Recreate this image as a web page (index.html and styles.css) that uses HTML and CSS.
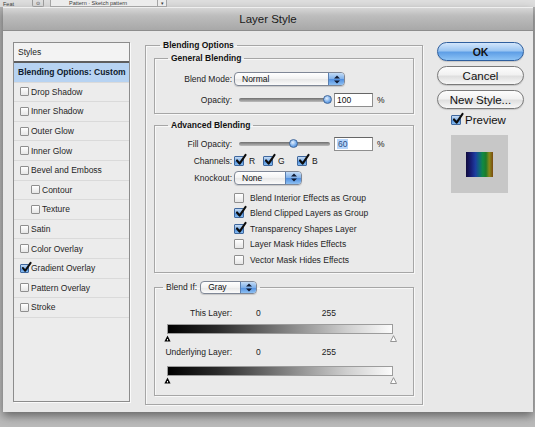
FILE: index.html
```html
<!DOCTYPE html>
<html lang="en">
<head>
<meta charset="utf-8">
<title>Layer Style</title>
<link rel="stylesheet" href="styles.css">
</head>
<body>
<div class="topstrip">
  <div class="ts-row">
    <span class="ts-feat">Feat</span>
    <span class="ts-icon">⊙</span>
    <span class="ts-drop"><span>Pattern · Sketch pattern</span><span class="ts-arrow">▾</span></span>
  </div>
</div>
<div class="dialog">
  <div class="titlebar">Layer Style</div>
  <div class="dbody">
    <div class="styles">
      <div class="styles-head">Styles</div>
      <div class="srow sel">Blending Options: Custom</div>
      <div class="srow"><span class="cb"></span>Drop Shadow</div>
      <div class="srow"><span class="cb"></span>Inner Shadow</div>
      <div class="srow"><span class="cb"></span>Outer Glow</div>
      <div class="srow"><span class="cb"></span>Inner Glow</div>
      <div class="srow"><span class="cb"></span>Bevel and Emboss</div>
      <div class="srow sub"><span class="cb"></span>Contour</div>
      <div class="srow sub"><span class="cb"></span>Texture</div>
      <div class="srow"><span class="cb"></span>Satin</div>
      <div class="srow"><span class="cb"></span>Color Overlay</div>
      <div class="srow"><span class="cb on"><svg width="11" height="11" viewBox="0 0 12 12"><path d="M2 6.5 4.6 9.6 10.5 1" fill="none" stroke="#0d0d0d" stroke-width="2.2" stroke-linecap="round" stroke-linejoin="round"/></svg></span>Gradient Overlay</div>
      <div class="srow"><span class="cb"></span>Pattern Overlay</div>
      <div class="srow"><span class="cb"></span>Stroke</div>
    </div>

    <fieldset class="outer">
      <legend>Blending Options</legend>

      <fieldset class="group general">
        <legend>General Blending</legend>
        <div class="form">
          <span class="lbl">Blend Mode:</span>
          <div class="ctl">
            <span class="popup w-normal"><span class="ptext">Normal</span><span class="parr"><svg width="8" height="11" viewBox="0 0 8 11"><path d="M1 4.5 4 1.5 7 4.5Z M1 6.5 4 9.5 7 6.5Z" fill="#101b33"/></svg></span></span>
          </div>
          <span class="lbl">Opacity:</span>
          <div class="ctl">
            <span class="slider"><span class="thumb" style="left:84px"></span></span>
            <span class="num">100</span><span class="pct">%</span>
          </div>
        </div>
      </fieldset>

      <fieldset class="group adv">
        <legend>Advanced Blending</legend>
        <div class="form">
          <span class="lbl">Fill Opacity:</span>
          <div class="ctl r17">
            <span class="slider"><span class="thumb" style="left:50px"></span></span>
            <span class="num"><span class="hl">60</span></span><span class="pct">%</span>
          </div>
          <span class="lbl">Channels:</span>
          <div class="ctl r17 chans">
            <span class="chan"><span class="cb big on"><svg width="12" height="12" viewBox="0 0 12 12"><path d="M2 6.5 4.6 9.6 10.5 1" fill="none" stroke="#0d0d0d" stroke-width="2.2" stroke-linecap="round" stroke-linejoin="round"/></svg></span>R</span>
            <span class="chan"><span class="cb big on"><svg width="12" height="12" viewBox="0 0 12 12"><path d="M2 6.5 4.6 9.6 10.5 1" fill="none" stroke="#0d0d0d" stroke-width="2.2" stroke-linecap="round" stroke-linejoin="round"/></svg></span>G</span>
            <span class="chan"><span class="cb big on"><svg width="12" height="12" viewBox="0 0 12 12"><path d="M2 6.5 4.6 9.6 10.5 1" fill="none" stroke="#0d0d0d" stroke-width="2.2" stroke-linecap="round" stroke-linejoin="round"/></svg></span>B</span>
          </div>
          <span class="lbl">Knockout:</span>
          <div class="ctl r17">
            <span class="popup w-none"><span class="ptext">None</span><span class="parr"><svg width="8" height="11" viewBox="0 0 8 11"><path d="M1 4.5 4 1.5 7 4.5Z M1 6.5 4 9.5 7 6.5Z" fill="#101b33"/></svg></span></span>
          </div>
          <div class="cbline first"><span class="cb big"></span>Blend Interior Effects as Group</div>
          <div class="cbline"><span class="cb big on"><svg width="12" height="12" viewBox="0 0 12 12"><path d="M2 6.5 4.6 9.6 10.5 1" fill="none" stroke="#0d0d0d" stroke-width="2.2" stroke-linecap="round" stroke-linejoin="round"/></svg></span>Blend Clipped Layers as Group</div>
          <div class="cbline"><span class="cb big on"><svg width="12" height="12" viewBox="0 0 12 12"><path d="M2 6.5 4.6 9.6 10.5 1" fill="none" stroke="#0d0d0d" stroke-width="2.2" stroke-linecap="round" stroke-linejoin="round"/></svg></span>Transparency Shapes Layer</div>
          <div class="cbline"><span class="cb big"></span>Layer Mask Hides Effects</div>
          <div class="cbline"><span class="cb big"></span>Vector Mask Hides Effects</div>
        </div>
      </fieldset>

      <fieldset class="group blendif">
        <legend><span>Blend If:</span><span class="popup w-gray"><span class="ptext">Gray</span><span class="parr"><svg width="8" height="11" viewBox="0 0 8 11"><path d="M1 4.5 4 1.5 7 4.5Z M1 6.5 4 9.5 7 6.5Z" fill="#101b33"/></svg></span></span></legend>
        <div class="blrow"><span class="lbl">This Layer:</span><span class="v0">0</span><span class="v255">255</span></div>
        <div class="gbar"></div>
        <div class="tris">
          <svg width="7" height="7" viewBox="0 0 7 7"><path d="M3.5 0.5 6.6 6.5H0.4Z" fill="#050505"/><rect x="3" y="4" width="1" height="1.5" fill="#fff"/></svg>
          <svg width="7" height="7" viewBox="0 0 7 7"><path d="M3.5 0.7 6.5 6.5H0.5Z" fill="#fff" stroke="#8a8a8a" stroke-width="0.9"/></svg>
        </div>
        <div class="blrow under"><span class="lbl">Underlying Layer:</span><span class="v0">0</span><span class="v255">255</span></div>
        <div class="gbar g2"></div>
        <div class="tris">
          <svg width="7" height="7" viewBox="0 0 7 7"><path d="M3.5 0.5 6.6 6.5H0.4Z" fill="#050505"/><rect x="3" y="4" width="1" height="1.5" fill="#fff"/></svg>
          <svg width="7" height="7" viewBox="0 0 7 7"><path d="M3.5 0.7 6.5 6.5H0.5Z" fill="#fff" stroke="#8a8a8a" stroke-width="0.9"/></svg>
        </div>
      </fieldset>
    </fieldset>

    <div class="side">
      <div class="btn ok">OK</div>
      <div class="btn">Cancel</div>
      <div class="btn">New Style...</div>
      <div class="preview"><span class="cb big on"><svg width="12" height="12" viewBox="0 0 12 12"><path d="M2 6.5 4.6 9.6 10.5 1" fill="none" stroke="#0d0d0d" stroke-width="2.2" stroke-linecap="round" stroke-linejoin="round"/></svg></span>Preview</div>
      <div class="swatch"><div class="swatch-grad"></div></div>
    </div>
  </div>
</div>
</body>
</html>
```

FILE: styles.css
```css
* { box-sizing: border-box; }
html, body { margin: 0; padding: 0; }
body {
  width: 535px;
  height: 427px;
  overflow: hidden;
  background: linear-gradient(#b0b0b0, #bababa);
  font-family: "Liberation Sans", Arial, Helvetica, sans-serif;
  color: #1c1c1c;
}

/* toolbar strip at the very top */
.topstrip { height: 7px; overflow: hidden; background: #dedede; }
.ts-row { display: flex; align-items: center; height: 7px; font-size: 5.5px; line-height: 6px; color: #3a3a3a; }
.ts-feat { margin-left: 3px; width: 29px; }
.ts-icon { width: 12px; height: 7px; border: 1px solid #9a9a9a; border-top: 0; border-radius: 0 0 2px 2px; margin-right: 6px; display: flex; align-items: center; justify-content: center; font-size: 5px; }
.ts-drop { width: 117px; height: 7px; border: 1px solid #a5a5a5; border-top: 0; padding-left: 18px; display: flex; justify-content: space-between; align-items: center; background: #ececec; }
.ts-arrow { width: 9px; border-left: 1px solid #a5a5a5; text-align: center; font-size: 5px; }

/* dialog */
.dialog { margin-left: 3px; width: 530px; background: #e8e8e8; box-shadow: 0 4px 9px rgba(0, 0, 0, 0.45); }
.titlebar {
  height: 24px;
  display: flex; align-items: center; justify-content: center;
  font-size: 11.5px; color: #1a1a1a;
  background: linear-gradient(#d6d6d6 0%, #bdbdbd 35%, #a8a8a8 100%);
  border-top: 1px solid #efefef;
  border-bottom: 1px solid #8d8d8d;
}
.dbody { height: 381px; display: flex; align-items: flex-start; padding: 9px 9px 0 10px; font-size: 8.5px; color: #161616; }

/* styles list */
.styles { margin-top: 2px; width: 117px; height: 360px; border: 1px solid #8c8c8c; background: #ececec; box-shadow: 1px 1px 0 #fafafa; }
.styles-head { height: 20px; padding-left: 4px; display: flex; align-items: center; background: #f3f3f3; border-bottom: 2px solid #5e5e5e; color: #1e1e1e; }
.srow { height: 19.6px; display: flex; align-items: center; gap: 2px; padding-left: 6px; border-bottom: 1px solid #dadada; color: #1f1f1f; }
.srow.sel { background: #b7d3f2; padding-left: 4px; color: #0e1a2c; font-weight: bold; }
.srow.sub { padding-left: 17px; }

/* checkboxes */
.cb { position: relative; flex: none; width: 9px; height: 9px; border: 1px solid #8f8f8f; border-radius: 1px; background: linear-gradient(#ffffff, #e6e6e6); }
.cb.big { width: 10px; height: 10px; }
.cb.on { background: linear-gradient(#c6dcf5, #7fb0e8 50%, #4c8ad8 51%, #86bdf2); border-color: #3f679d; }
.cb svg { position: absolute; left: 0; top: -3px; overflow: visible; }

/* fieldsets (etched group boxes) */
fieldset { min-width: 0; }
.outer { margin: 0 0 0 15px; width: 278px; padding: 0 8px 8px; border: 1px solid #a6a6a6; box-shadow: inset 1px 1px 0 #f8f8f8, 1px 1px 0 #f8f8f8; }
legend { padding: 0 3px; font-weight: bold; font-size: 8.5px; line-height: 10px; color: #111; }
.outer > legend { margin-left: 6px; }
.group { margin: 3px 0 0; padding: 7px 0 4px; border: 1px solid #a6a6a6; background: #eaeaea; box-shadow: inset 1px 1px 0 #f8f8f8, 1px 1px 0 #f8f8f8; }
.group > legend { margin-left: 13px; }

.form { display: grid; grid-template-columns: 78px 1fr; column-gap: 1px; align-items: center; }
.general .form { grid-template-rows: 18px 18px; row-gap: 3px; }
.lbl { text-align: right; padding-right: 1px; color: #222; }
.ctl { display: flex; align-items: center; }
.r17 { height: 17px; }

.adv { margin-top: 6px; padding-top: 5px; }
.chans { display: grid; grid-template-columns: 29px 34px auto; }
.chan { display: flex; align-items: center; gap: 5px; }
.cbline { grid-column: 2; height: 15.5px; display: flex; align-items: center; gap: 6px; color: #1f1f1f; }
.cbline.first { margin-top: 4px; }

/* popup menus */
.popup { display: flex; align-items: center; height: 14px; border: 1px solid #7f8796; border-radius: 4px; background: linear-gradient(#ffffff, #f2f2f2 50%, #e7e7e7 51%, #fbfbfb); overflow: hidden; box-shadow: 0 1px 1px rgba(0, 0, 0, 0.15); font-weight: normal; }
.ptext { flex: 1; padding-left: 7px; color: #111; }
.parr { width: 16px; height: 100%; background: linear-gradient(#c4dcf6, #7fb0ea 50%, #4f8ee0 51%, #8ec0f2); border-left: 1px solid #5a7fb0; display: flex; align-items: center; justify-content: center; }
.w-normal { width: 111px; }
.w-none { width: 68px; }
.w-gray { width: 57px; height: 13px; }

/* sliders & number fields */
.slider { position: relative; margin-left: 5px; width: 91px; height: 4px; border-radius: 2px; background: linear-gradient(#6f6f6f, #bdbdbd); }
.thumb { position: absolute; top: -3px; width: 9px; height: 9px; border-radius: 50%; background: radial-gradient(circle at 40% 35%, #e4f0fd, #6ea6e8 60%, #3b78c8); border: 1px solid #41689c; }
.num { margin-left: 4px; width: 39px; height: 14px; background: #fff; border: 1px solid #8e8e8e; border-top-color: #666; padding-left: 2px; display: flex; align-items: center; color: #111; }
.hl { background: #b8d6fb; color: #2a4f86; padding: 0 1px; }
.pct { margin-left: 4px; }

/* blend if */
.blendif { margin-top: 7.5px; padding: 12px 0 11px; }
.blendif > legend { margin-left: 8px; display: flex; align-items: center; gap: 3px; height: 14px; font-weight: normal; color: #222; }
.blrow { display: flex; align-items: center; height: 14px; color: #222; }
.blrow .lbl { width: 78px; }
.v0 { margin-left: 23px; }
.v255 { margin-left: 61px; }
.blrow.under { margin-top: 3px; }
.gbar { margin: 4px 0 0 12px; width: 226px; height: 10px; border: 1px solid #9c9c9c; background: linear-gradient(90deg, #000 0%, #2a2a2a 22%, #7a7a7a 50%, #cfcfcf 80%, #fbfbfb 100%); }
.gbar.g2 { margin-top: 7px; }
.tris { display: flex; justify-content: space-between; margin: 1px 0 0 9px; width: 233px; height: 7px; }

/* right column */
.side { margin: 2px 0 0 14px; width: 87px; display: flex; flex-direction: column; }
.btn { height: 19px; border-radius: 10px; border: 1px solid #7a7a7a; background: linear-gradient(#fdfdfd, #f1f1f1 45%, #dfdfdf 55%, #f7f7f7); display: flex; align-items: center; justify-content: center; font-size: 11.5px; color: #111; box-shadow: 0 1px 1px rgba(0, 0, 0, 0.15); }
.btn + .btn { margin-top: 5px; }
.btn.ok { border-color: #2f5f9e; background: linear-gradient(#d3e6fb 0%, #9cc6f2 45%, #5f9fe6 55%, #8cc2f5 100%); font-weight: bold; font-size: 10.5px; }
.preview { display: flex; align-items: center; gap: 4px; margin: 5px 0 0 14px; height: 11px; font-size: 11.5px; color: #111; }
.swatch { margin: 10px 0 0 14px; width: 57px; height: 58px; background: #c7c7c7; display: flex; align-items: center; justify-content: center; }
.swatch-grad { width: 27px; height: 25px; background: linear-gradient(90deg, #100a3c 0%, #18207a 20%, #1d3ea0 35%, #0f6a78 50%, #108a44 62%, #1f7a2a 74%, #8a8a1a 86%, #7a4a10 100%); }
```
